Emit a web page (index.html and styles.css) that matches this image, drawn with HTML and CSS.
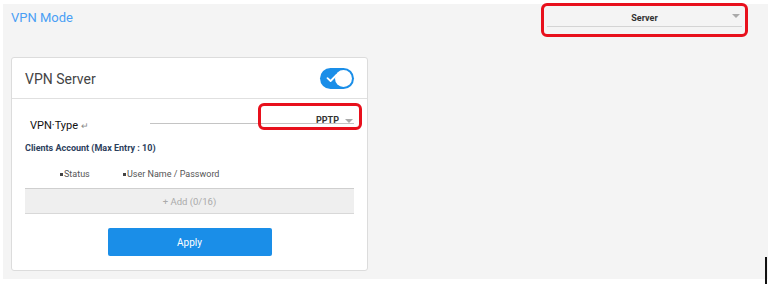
FILE: index.html
```html
<!DOCTYPE html>
<html lang="en">
<head>
    <meta charset="UTF-8">
    <meta name="viewport" content="width=device-width, initial-scale=1.0">
    <title>VPN Mode</title>
    <link rel="stylesheet" href="styles.css">
</head>
<body>
    <div class="page">
        <div class="top-row">
            <h2 class="mode-title">VPN Mode</h2>
            <div class="mode-select mark">
                <div class="select-line">
                    <span class="select-value">Server</span>
                    <span class="caret"></span>
                </div>
            </div>
        </div>

        <div class="card">
            <div class="card-header">
                <span class="card-title">VPN Server</span>
                <div class="toggle">
                    <svg class="check" width="12" height="10" viewBox="0 0 12 10">
                        <path d="M1.5 5.2 L4.6 8 L10.5 2" fill="none" stroke="#fff" stroke-width="1.8" stroke-linecap="round" stroke-linejoin="round"/>
                    </svg>
                    <span class="knob"></span>
                </div>
            </div>

            <div class="card-body">
                <div class="type-row">
                    <span class="type-label">VPN·Type <span class="ret">↵</span></span>
                    <div class="type-field">
                        <div class="type-box mark">
                            <span class="type-value">PPTP</span>
                            <span class="caret"></span>
                        </div>
                    </div>
                </div>

                <div class="clients-title">Clients Account (Max Entry : 10)</div>

                <div class="col-heads">
                    <span class="col col-status">Status</span>
                    <span class="col col-user">User Name / Password</span>
                </div>

                <div class="add-row">+ Add (0/16)</div>

                <div class="actions">
                    <button type="button" class="apply-btn">Apply</button>
                </div>
            </div>
        </div>
    </div>
    <div class="cursor-bar"></div>
</body>
</html>
```

FILE: styles.css
```css
* {
    box-sizing: border-box;
}
body {
    margin: 0;
    background-color: #fff;
    font-family: Roboto, "Liberation Sans", Arial, sans-serif;
    position: relative;
    height: 284px;
    overflow: hidden;
}
.page {
    margin: 4px 0 0 3px;
    height: 275px;
    background-color: #f4f4f4;
    padding: 0 8px;
}
.top-row {
    display: flex;
    justify-content: space-between;
    align-items: flex-start;
    height: 53px;
}
.mode-title {
    margin: 6px 0 0 0;
    font-size: 13px;
    font-weight: normal;
    color: #4a9ff5;
}
.mark {
    border: 3px solid #e8101c;
    border-radius: 6px;
}
.mode-select {
    width: 207px;
    height: 34px;
    margin: -1px 12px 0 0;
    padding: 0 3px;
}
.select-line {
    position: relative;
    display: flex;
    justify-content: center;
    align-items: center;
    height: 18px;
    margin-top: 3px;
    border-bottom: 1px solid #d4d4d4;
}
.select-value {
    font-size: 9px;
    font-weight: bold;
    color: #333;
}
.caret {
    width: 0;
    height: 0;
    border-left: 4px solid transparent;
    border-right: 4px solid transparent;
    border-top: 4px solid #aaa;
}
.select-line .caret {
    position: absolute;
    right: 2px;
    top: 5px;
}
.card {
    width: 357px;
    height: 214px;
    background-color: #fff;
    border: 1px solid #dcdcdc;
    border-radius: 3px;
}
.card-header {
    display: flex;
    justify-content: space-between;
    align-items: center;
    height: 41px;
    padding: 0 13px 0 13px;
    border-bottom: 1px solid #e0e0e0;
}
.card-title {
    font-size: 14px;
    color: #444;
    margin-top: 1px;
}
.toggle {
    position: relative;
    width: 34px;
    height: 21px;
    border-radius: 11px;
    background-color: #1a8ee8;
    display: flex;
    align-items: center;
    padding-left: 6px;
}
.knob {
    position: absolute;
    right: 2px;
    top: 2px;
    width: 17px;
    height: 17px;
    border-radius: 50%;
    background-color: #fff;
}
.card-body {
    padding: 0 13px;
}
.type-row {
    display: flex;
    align-items: flex-end;
    height: 33px;
}
.type-label {
    width: 125px;
    padding-left: 5px;
    font-size: 11px;
    color: #111;
    margin-bottom: 0;
}
.ret {
    font-size: 9px;
    color: #888;
}
.type-field {
    flex: 1;
    position: relative;
    height: 20px;
    border-bottom: 1px solid #c4c4c4;
    margin-bottom: 8px;
}
.type-box {
    position: absolute;
    left: 108px;
    right: -8px;
    top: -1px;
    height: 27px;
    display: flex;
    justify-content: flex-end;
    align-items: flex-start;
    padding: 9px 6px 0 0;
}
.type-box .caret {
    margin-top: 4px;
}
.type-value {
    font-size: 9px;
    font-weight: bold;
    color: #333;
    margin-right: 6px;
}
.clients-title {
    margin-top: 11px;
    font-size: 9px;
    font-weight: bold;
    color: #2c3e5c;
}
.col-heads {
    display: flex;
    height: 28px;
    align-items: center;
    margin-top: 7px;
    font-size: 9px;
    color: #555;
}
.col::before {
    content: "";
    display: inline-block;
    width: 3px;
    height: 3px;
    background-color: #444;
    margin: 0 1px 1px 0;
    vertical-align: middle;
}
.col-status {
    margin-left: 35px;
    width: 63px;
}
.add-row {
    height: 26px;
    background-color: #efefef;
    border-top: 1px solid #cfcfcf;
    border-bottom: 1px solid #d8d8d8;
    display: flex;
    justify-content: center;
    align-items: center;
    font-size: 9.5px;
    color: #aaa;
}
.actions {
    display: flex;
    justify-content: center;
    margin-top: 14px;
}
.apply-btn {
    width: 164px;
    height: 28px;
    border: none;
    border-radius: 2px;
    background-color: #1a8ee8;
    color: #fff;
    font-family: inherit;
    font-size: 10px;
}
.cursor-bar {
    position: absolute;
    left: 765px;
    top: 257px;
    width: 2px;
    height: 27px;
    background-color: #111;
}
```
